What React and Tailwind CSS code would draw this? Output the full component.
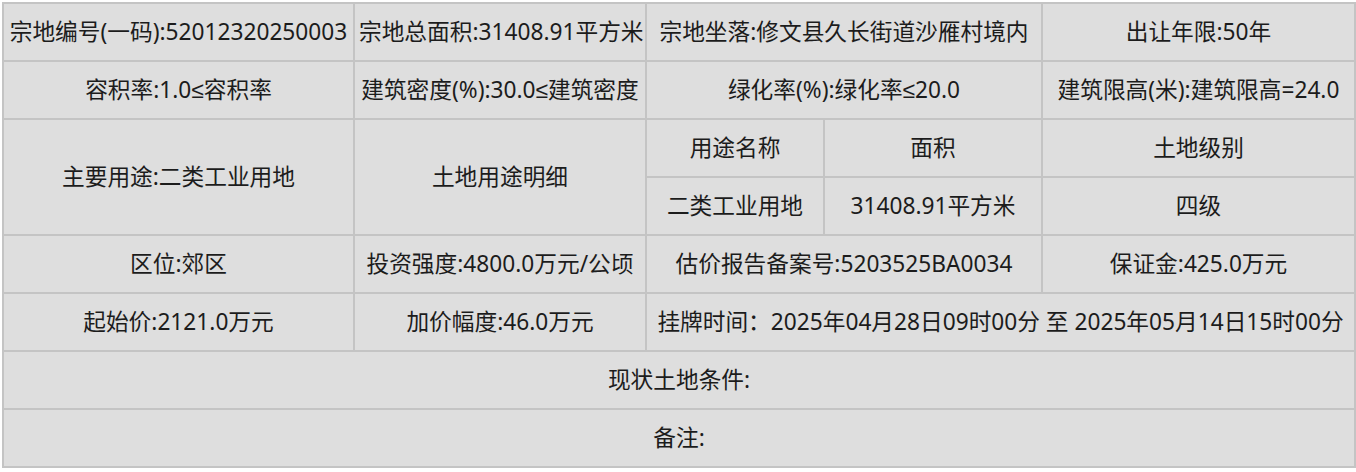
export default function App() {
  const td = "border-2 border-[#c4c4c4] h-[58px] px-1 text-center align-middle whitespace-nowrap";
  const le = <span style={{ fontFamily: '"Liberation Sans", "DejaVu Sans", sans-serif' }}>≤</span>;
  return (
    <div className="w-[1356px] h-[472px] bg-white p-[2px]" style={{ fontFamily: '"Noto Sans", "Noto Sans CJK SC", sans-serif' }}>
      <table className="table-fixed border-collapse w-[1352px] bg-[#dedede] text-[22.7px] text-[#1c1c1c] leading-none">
        <colgroup>
          <col className="w-[351px]" />
          <col className="w-[292px]" />
          <col className="w-[178px]" />
          <col className="w-[218px]" />
          <col className="w-[313px]" />
        </colgroup>
        <tbody>
          <tr>
            <td className={td}>宗地编号(一码):52012320250003</td>
            <td className={td}>宗地总面积:31408.91平方米</td>
            <td className={td} colSpan={2}>宗地坐落:修文县久长街道沙雁村境内</td>
            <td className={td}>出让年限:50年</td>
          </tr>
          <tr>
            <td className={td}>容积率:1.0{le}容积率</td>
            <td className={td}>建筑密度(%):30.0{le}建筑密度</td>
            <td className={td} colSpan={2}>绿化率(%):绿化率{le}20.0</td>
            <td className={td}>建筑限高(米):建筑限高=24.0</td>
          </tr>
          <tr>
            <td className={td} rowSpan={2}>主要用途:二类工业用地</td>
            <td className={td} rowSpan={2}>土地用途明细</td>
            <td className={td}>用途名称</td>
            <td className={td}>面积</td>
            <td className={td}>土地级别</td>
          </tr>
          <tr>
            <td className={td}>二类工业用地</td>
            <td className={td}>31408.91平方米</td>
            <td className={td}>四级</td>
          </tr>
          <tr>
            <td className={td}>区位:郊区</td>
            <td className={td}>投资强度:4800.0万元/公顷</td>
            <td className={td} colSpan={2}>估价报告备案号:5203525BA0034</td>
            <td className={td}>保证金:425.0万元</td>
          </tr>
          <tr>
            <td className={td}>起始价:2121.0万元</td>
            <td className={td}>加价幅度:46.0万元</td>
            <td className={td} colSpan={3}>挂牌时间：2025年04月28日09时00分 至 2025年05月14日15时00分</td>
          </tr>
          <tr>
            <td className={td} colSpan={5}>现状土地条件:</td>
          </tr>
          <tr>
            <td className={td} colSpan={5}>备注:</td>
          </tr>
        </tbody>
      </table>
    </div>
  );
}
